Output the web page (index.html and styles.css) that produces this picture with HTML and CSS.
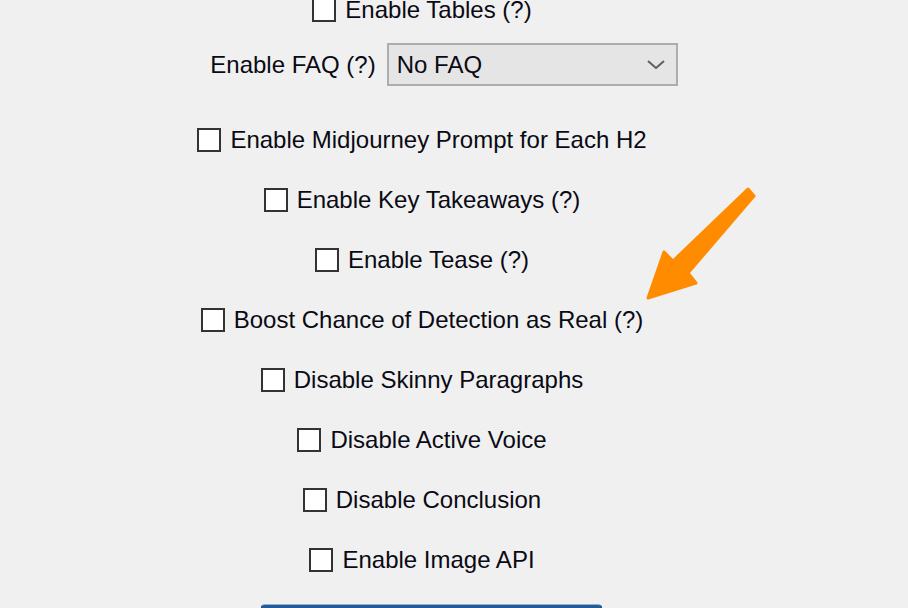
FILE: index.html
```html
<!DOCTYPE html>
<html>
<head>
<meta charset="utf-8">
<link rel="stylesheet" href="styles.css">
</head>
<body>
<main class="form">
  <label class="row"><span class="box"></span><span class="txt">Enable Tables (?)</span></label>
  <div class="row faq">
    <span class="txt">Enable FAQ (?)</span>
    <div class="select">
      <span class="txt">No FAQ</span>
      <svg class="chev" width="18" height="9" viewBox="0 0 18 9"><path d="M1 1 L9 8 L17 1" fill="none" stroke="#5f5f5f" stroke-width="2"/></svg>
    </div>
  </div>
  <label class="row"><span class="box"></span><span class="txt">Enable Midjourney Prompt for Each H2</span></label>
  <label class="row"><span class="box"></span><span class="txt">Enable Key Takeaways (?)</span></label>
  <label class="row"><span class="box"></span><span class="txt">Enable Tease (?)</span></label>
  <label class="row"><span class="box"></span><span class="txt">Boost Chance of Detection as Real (?)</span></label>
  <label class="row"><span class="box"></span><span class="txt">Disable Skinny Paragraphs</span></label>
  <label class="row"><span class="box"></span><span class="txt">Disable Active Voice</span></label>
  <label class="row"><span class="box"></span><span class="txt">Disable Conclusion</span></label>
  <label class="row"><span class="box"></span><span class="txt">Enable Image API</span></label>
  <div class="button"></div>
</main>
<svg class="arrow" width="130" height="130" viewBox="640 180 130 130">
  <polygon points="748,189 754,196 688,273 696,283 648,298 664,252 673,261" fill="#ff8c00" stroke="#ff8c00" stroke-width="3" stroke-linejoin="round"/>
</svg>
</body>
</html>
```

FILE: styles.css
```css
html, body {
  margin: 0;
  padding: 0;
  background: #f0f0f0;
  overflow: hidden;
  height: 608px;
}
body {
  font-family: "Liberation Sans", Arial, sans-serif;
  color: #000;
  position: relative;
}
.form {
  width: 844px;
  display: flex;
  flex-direction: column;
  align-items: center;
  margin-top: -20px;
}
.row {
  height: 60px;
  display: flex;
  align-items: center;
  gap: 9px;
}
.txt {
  font-size: 24px;
  line-height: 1;
  white-space: nowrap;
  color: #0a0a14;
}
.box {
  width: 20px;
  height: 20px;
  border: 2px solid #333;
  background: #fff;
  flex: none;
}
.faq {
  height: 49px;
  margin-bottom: 21px;
  margin-left: 44px;
  gap: 11px;
}
.select {
  width: 268px;
  height: 39px;
  border: 2px solid #adadad;
  background: #e5e5e5;
  display: flex;
  align-items: center;
  justify-content: space-between;
  padding: 0 11px 0 8px;
}
.chev {
  display: block;
}
.button {
  margin-top: 14px;
  margin-left: 18px;
  width: 339px;
  height: 40px;
  background: #225b96;
  border: 1px solid #174a80;
  border-top-color: #8fb0d3;
  border-radius: 4px;
}
.arrow {
  position: absolute;
  left: 640px;
  top: 180px;
}
```
